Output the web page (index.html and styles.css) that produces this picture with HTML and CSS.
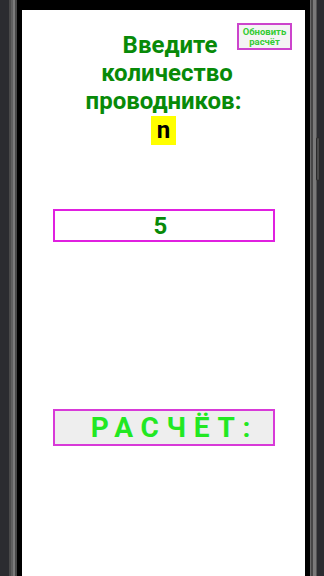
FILE: index.html
```html
<!DOCTYPE html>
<html lang="ru">
<head>
<meta charset="utf-8">
<title>Проводники</title>
<link rel="stylesheet" href="styles.css">
</head>
<body>
<div class="device">
  <div class="frame-left"></div>
  <div class="screen-col">
    <div class="notch"></div>
    <main class="screen">
      <button class="refresh">Обновить<br>расчёт</button>
      <h1 class="title"><span class="l1">Введите</span><br><span class="l2">количество</span><br>проводников:</h1>
      <div class="var"><span class="var-n">n</span></div>
      <div class="input">5</div>
      <button class="calc">РАСЧЁТ:</button>
    </main>
  </div>
  <div class="frame-right"><div class="vol"></div></div>
</div>
</body>
</html>
```

FILE: styles.css
```css
html, body {
  margin: 0;
  padding: 0;
  width: 324px;
  height: 576px;
  overflow: hidden;
  font-family: Roboto, "Liberation Sans", sans-serif;
}
.device {
  display: flex;
  width: 324px;
  height: 576px;
}
.frame-left {
  width: 22px;
  flex: none;
  background: linear-gradient(to right,
    #2b2c30 0 9px, #4a4a4a 9px 11px, #5f5f5f 11px 13px, #7a7a7a 13px 15px,
    #474747 15px 17px, #000 17px 22px);
}
.frame-right {
  width: 19px;
  flex: none;
  position: relative;
  background: linear-gradient(to right,
    #000 0 5px, #6a6a6a 5px 6px, #474747 6px 8px, #7a7a7a 8px 11px,
    #555 11px 12px, #2b2c30 12px 19px);
}
.vol {
  position: absolute;
  left: 11px;
  top: 137px;
  width: 2px;
  height: 42px;
  border: 1px solid #2a2a2a;
  border-radius: 2px;
  background: #4c4c4c;
}
.screen-col {
  flex: 1;
  display: flex;
  flex-direction: column;
}
.notch {
  height: 10px;
  background: #000;
  flex: none;
}
.screen {
  flex: 1;
  background: #fff;
  position: relative;
  display: flex;
  flex-direction: column;
  align-items: center;
}
.refresh {
  position: absolute;
  top: 13px;
  right: 13px;
  width: 55px;
  height: 27px;
  margin: 0;
  padding: 0;
  box-sizing: border-box;
  border: 2px solid #cc44cc;
  background: #f4f4f4;
  color: #33cc33;
  font-family: Roboto, "Liberation Sans", sans-serif;
  font-weight: bold;
  font-size: 9.5px;
  line-height: 10px;
  text-align: center;
}
.title {
  margin: 21px 0 0 0;
  font-size: 24px;
  line-height: 28px;
  font-weight: bold;
  color: #088a08;
  text-align: center;
}
.l1 { padding-left: 13px; }
.l2 { padding-left: 7px; }
.var {
  display: flex;
  justify-content: center;
  margin-top: 1px;
}
.var-n {
  background: #ffff00;
  color: #000;
  font-weight: bold;
  font-size: 24px;
  line-height: 29px;
  padding: 0 6px;
}
.input {
  margin-top: 64px;
  width: 222px;
  height: 33px;
  box-sizing: border-box;
  border: 2px solid #e020e0;
  color: #088a08;
  font-weight: bold;
  font-size: 24px;
  line-height: 30px;
  padding-right: 6px;
  text-align: center;
}
.calc {
  margin: 167px 0 0 0;
  width: 222px;
  height: 37px;
  box-sizing: border-box;
  border: 2px solid #d83ad8;
  background: #eeeeee;
  color: #22e822;
  font-family: Roboto, "Liberation Sans", sans-serif;
  font-weight: bold;
  font-size: 28px;
  line-height: 33px;
  letter-spacing: 7.7px;
  padding: 0 0 0 22px;
  text-align: center;
}
```
